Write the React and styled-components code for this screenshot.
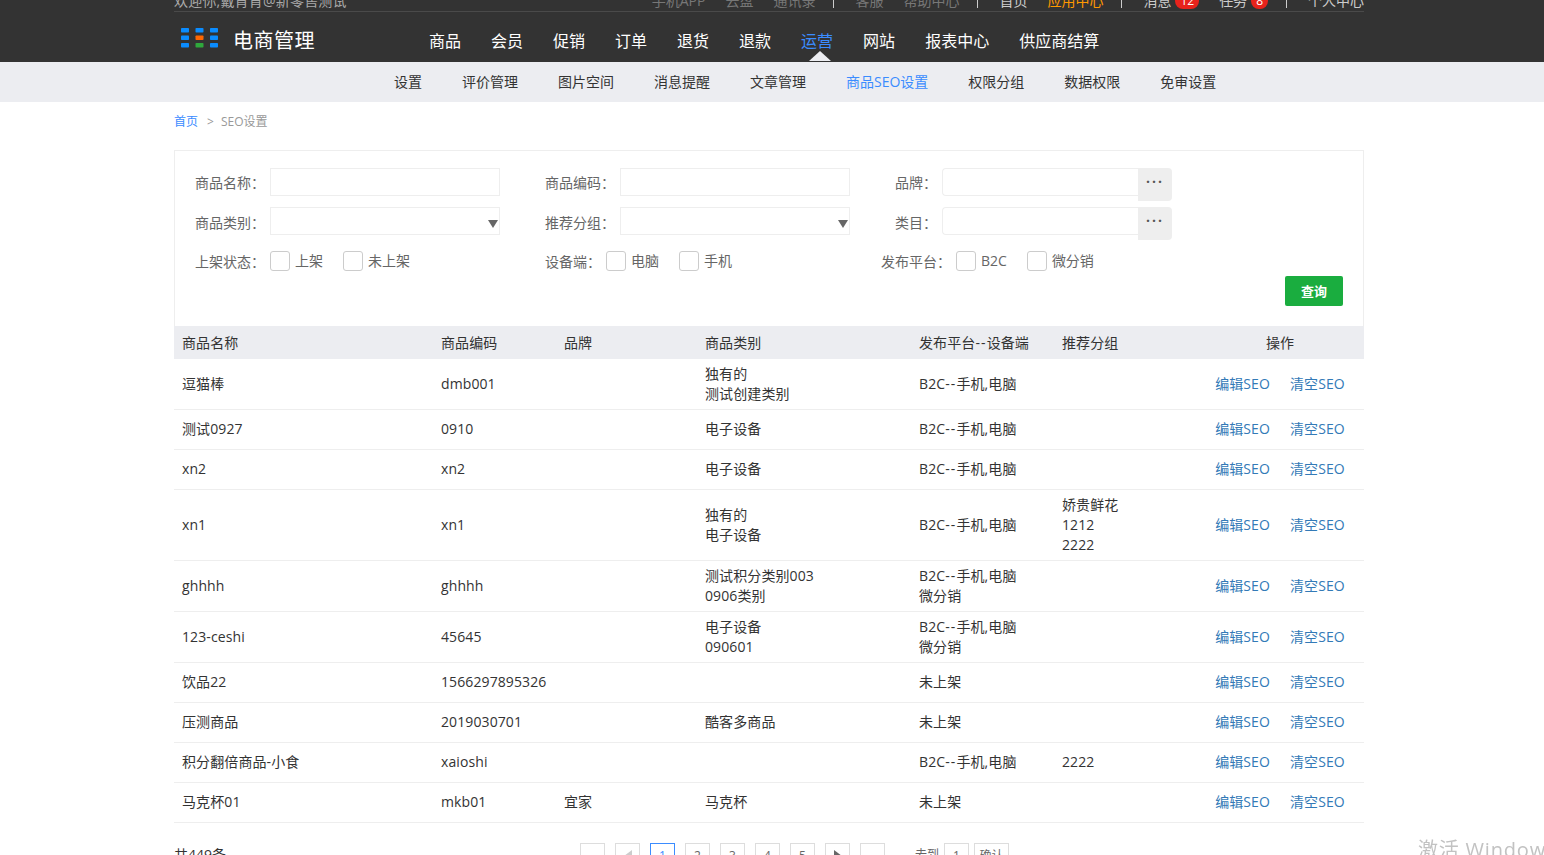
import React from 'react';
import styled, { createGlobalStyle } from 'styled-components';

const GlobalStyle = createGlobalStyle`
  html, body {
    margin: 0;
    height: 855px;
    overflow: hidden;
    background: #fff;
    font-family: "Open Sans", "Noto Sans CJK SC", sans-serif;
    font-size: 14px;
    color: #333;
  }
  * { box-sizing: border-box; }
`;

const Header = styled.header`
  background: #333;
  height: 62px;
`;
const Wrap = styled.div`
  width: 1190px;
  margin-left: 174px;
`;
const TopBar = styled.div`
  height: 12px;
  border-bottom: 1px solid #4a4a4a;
  display: flex;
  justify-content: space-between;
  align-items: flex-end;
  overflow: hidden;
  white-space: nowrap;
  line-height: 20px;
`;
const Welcome = styled.span`
  color: #aaa;
  letter-spacing: 0.2px;
`;
const TopLinks = styled.div`
  display: flex;
  align-items: center;
`;
const TopLink = styled.a`
  color: ${p => p.$color || '#ccc'};
  margin-left: ${p => p.$gap ?? 20}px;
`;
const Sep = styled.i`
  width: 1px;
  height: 14px;
  background: #ccc;
  margin: 0 1px 0 18px;
`;
const Badge = styled.b`
  display: inline-block;
  margin-left: 4px;
  min-width: 16px;
  padding: 0 5px;
  height: 16px;
  line-height: 16px;
  border-radius: 8px;
  font-size: 12px;
  font-weight: 400;
  text-align: center;
  color: #fff;
  background: #e8231c;
`;
const MainRow = styled.div`
  display: flex;
  height: 50px;
  align-items: center;
`;
const Brand = styled.div`
  width: 255px;
  padding-left: 7px;
  display: flex;
  align-items: center;
  gap: 15px;
  color: #fff;
  font-size: 20px;
  letter-spacing: 0.5px;
  margin-top: 5px;
  svg { margin-top: -4px; }
`;
const Nav = styled.nav`
  display: flex;
  gap: 30px;
  padding-top: 8px;
`;
const NavItem = styled.a`
  position: relative;
  font-size: 16px;
  line-height: 24px;
  color: ${p => (p.$active ? '#3b8cff' : '#fff')};
  ${p => p.$active && `
    &::after {
      content: '';
      position: absolute;
      left: 8px;
      top: 22px;
      border-left: 11px solid transparent;
      border-right: 11px solid transparent;
      border-bottom: 10px solid #ecedf1;
    }
  `}
`;
const SubBar = styled.div`
  background: #ecedf1;
  height: 40px;
`;
const SubNav = styled.div`
  display: flex;
  gap: 40px;
  padding-left: 220px;
  line-height: 40px;
`;
const SubItem = styled.a`
  color: ${p => (p.$active ? '#3b8cff' : '#333')};
`;
const Crumbs = styled.div`
  display: flex;
  align-items: center;
  height: 38px;
  font-size: 12px;
  color: #999;
`;
const CrumbLink = styled.a`
  color: #3b8cff;
`;
const CrumbSep = styled.span`
  margin: 0 7px 0 9px;
`;
const Panel = styled.section`
  margin-top: 10px;
  border: 1px solid #eee;
  border-bottom: 0;
  padding: 17px 20px 20px;
  height: 176px;
`;
const FormRow = styled.div`
  display: flex;
  height: 28px;
  margin-bottom: 11px;
`;
const CheckRow = styled.div`
  display: flex;
  height: 20px;
  margin-top: 16px;
  margin-bottom: 5px;
`;
const Field = styled.div`
  width: ${p => p.$w}px;
  display: flex;
  align-items: flex-start;
`;
const Label = styled.label`
  flex: none;
  width: ${p => p.$w}px;
  margin-right: 5px;
  padding-top: ${p => p.$drop || 0}px;
  color: #666;
  line-height: 28px;
  white-space: nowrap;
`;
const CheckLabel = styled(Label)`
  line-height: 22px;
`;
const Input = styled.input`
  width: ${p => p.$w || 230}px;
  height: 28px;
  border: 1px solid #eee;
  background: #fff;
  outline: 0;
  padding: 0 6px;
`;
const RoundInput = styled(Input)`
  border-radius: 4px 0 0 4px;
  border-right: 0;
`;
const Select = styled.div`
  position: relative;
  width: 230px;
  height: 28px;
  border: 1px solid #eee;
  &::after {
    content: '';
    position: absolute;
    right: 1px;
    top: 12px;
    border-left: 5.5px solid transparent;
    border-right: 5.5px solid transparent;
    border-top: 8px solid #666;
  }
`;
const Dots = styled.button`
  flex: none;
  width: 34px;
  height: 33px;
  padding: 0 0 7px;
  border: 0;
  border-radius: 0 4px 4px 0;
  background: #eee;
  color: #555;
  font: 700 14px "Open Sans", sans-serif;
  letter-spacing: 2px;
`;
const Check = styled.label`
  display: flex;
  align-items: flex-start;
  margin-right: 20px;
  color: #666;
  height: 20px;
  line-height: 19px;
  &::before {
    content: '';
    box-sizing: border-box;
    width: 20px;
    height: 20px;
    margin-right: 5px;
    border: 1px solid #ccc;
    border-radius: 3px;
    background: #fff;
  }
`;
const Actions = styled.div`
  display: flex;
  justify-content: flex-end;
`;
const Search = styled.button`
  width: 58px;
  height: 30px;
  padding: 0 0 2px;
  border: 0;
  border-radius: 2px;
  background: #1aad3f;
  color: #fff;
  font: 700 13px "Noto Sans CJK SC", sans-serif;
`;
const Table = styled.table`
  width: 1190px;
  table-layout: fixed;
  border-collapse: collapse;
  letter-spacing: 0.1px;
`;
const Th = styled.th`
  width: ${p => p.$w}px;
  height: 33px;
  padding: 0 8px 2px;
  background: #ecedf1;
  font-weight: 400;
  text-align: ${p => p.$center ? 'center' : 'left'};
`;
const Tr = styled.tr`
  border-bottom: 1px solid #eee;
  ${p => p.$single && 'td { padding-bottom: 7px; }'}
`;
const Td = styled.td`
  height: 40px;
  padding: 5px 8px;
  line-height: 20px;
  white-space: nowrap;
  text-align: ${p => p.$center ? 'center' : 'left'};
`;
const Line = styled.div``;
const Dash = styled.span`
  letter-spacing: 1.1px;
`;
const OpLink = styled.a`
  color: #337ab7;
  & + & { margin-left: 20px; }
`;
const Pager = styled.div`
  display: flex;
  margin-top: 20px;
  line-height: 24px;
`;
const Total = styled.div`
  width: 406px;
`;
const Pages = styled.div`
  display: flex;
  gap: 10px;
`;
const Page = styled.a`
  width: 25px;
  height: 25px;
  display: flex;
  align-items: center;
  justify-content: center;
  font-size: 12px;
  border: 1px solid ${p => (p.$active ? '#3b8cff' : '#ddd')};
  color: ${p => (p.$active ? '#3b8cff' : '#666')};
`;
const Arrow = styled.i`
  border-top: 6px solid transparent;
  border-bottom: 6px solid transparent;
  ${p => p.$left
    ? 'border-right: 8px solid #ccc;'
    : 'border-left: 8px solid #666;'}
`;
const Jump = styled.div`
  display: flex;
  margin-left: 30px;
  gap: 5px;
  font-size: 12px;
  color: #666;
`;
const JumpBox = styled.span`
  width: ${p => p.$w}px;
  height: 25px;
  border: 1px solid #ddd;
  text-align: center;
`;
const Watermark = styled.div`
  position: fixed;
  left: 1418px;
  top: 836px;
  font-size: 20px;
  letter-spacing: 0.8px;
  line-height: 28px;
  color: #c2c2c2;
  white-space: nowrap;
`;

const columns = [
  { title: '商品名称', w: 259 },
  { title: '商品编码', w: 123 },
  { title: '品牌', w: 141 },
  { title: '商品类别', w: 214 },
  { title: '发布平台--设备端', w: 143 },
  { title: '推荐分组', w: 142 },
  { title: '操作', w: 168, center: true },
];

const B2C = 'B2C--手机,电脑';
const rows = [
  ['逗猫棒', 'dmb001', '', ['独有的', '测试创建类别'], [B2C], []],
  ['测试0927', '0910', '', ['电子设备'], [B2C], []],
  ['xn2', 'xn2', '', ['电子设备'], [B2C], []],
  ['xn1', 'xn1', '', ['独有的', '电子设备'], [B2C], ['娇贵鲜花', '1212', '2222']],
  ['ghhhh', 'ghhhh', '', ['测试积分类别003', '0906类别'], [B2C, '微分销'], []],
  ['123-ceshi', '45645', '', ['电子设备', '090601'], [B2C, '微分销'], []],
  ['饮品22', '1566297895326', '', [], ['未上架'], []],
  ['压测商品', '2019030701', '', ['酷客多商品'], ['未上架'], []],
  ['积分翻倍商品-小食', 'xaioshi', '', [], [B2C], ['2222']],
  ['马克杯01', 'mkb01', '宜家', ['马克杯'], ['未上架'], []],
];

const Logo = () => (
  <svg width="37" height="20" viewBox="0 0 37 20">
    {[0, 7.5, 15].map(y => [0, 14.5, 29].map(x => (
      <rect
        key={`${x}-${y}`}
        x={x}
        y={y}
        width="8"
        height="4.5"
        rx="0.8"
        fill={x === 14.5 && y === 7.5 ? '#f60' : x === 14.5 && y === 15 ? '#2fa83c' : '#0a8cff'}
      />
    )))}
  </svg>
);

// the double hyphen sits wider in the original font
const Dashed = ({ text }) => {
  const parts = text.split('--');
  if (parts.length < 2) return text;
  return <>{parts[0]}<Dash>--</Dash>{parts[1]}</>;
};

const Lines = ({ items }) => items.map(t => <Line key={t}><Dashed text={t} /></Line>);

export default function App() {
  return (
    <>
      <GlobalStyle />
      <Header>
        <Wrap>
          <TopBar>
            <Welcome>欢迎你,戴肯肯@新零售测试</Welcome>
            <TopLinks>
              <TopLink $color="#777">手机APP</TopLink>
              <TopLink $color="#777">云盘</TopLink>
              <TopLink $color="#777">通讯录</TopLink>
              <Sep />
              <TopLink $color="#777">客服</TopLink>
              <TopLink $color="#777">帮助中心</TopLink>
              <Sep />
              <TopLink>首页</TopLink>
              <TopLink $color="#f90">应用中心</TopLink>
              <Sep />
              <TopLink>消息</TopLink>
              <Badge>12</Badge>
              <TopLink>任务</TopLink>
              <Badge>8</Badge>
              <Sep />
              <TopLink>个人中心</TopLink>
            </TopLinks>
          </TopBar>
          <MainRow>
            <Brand>
              <Logo />
              电商管理
            </Brand>
            <Nav>
              {['商品', '会员', '促销', '订单', '退货', '退款'].map(t => <NavItem key={t}>{t}</NavItem>)}
              <NavItem $active>运营</NavItem>
              {['网站', '报表中心', '供应商结算'].map(t => <NavItem key={t}>{t}</NavItem>)}
            </Nav>
          </MainRow>
        </Wrap>
      </Header>
      <SubBar>
        <Wrap>
          <SubNav>
            {['设置', '评价管理', '图片空间', '消息提醒', '文章管理'].map(t => <SubItem key={t}>{t}</SubItem>)}
            <SubItem $active>商品SEO设置</SubItem>
            {['权限分组', '数据权限', '免审设置'].map(t => <SubItem key={t}>{t}</SubItem>)}
          </SubNav>
        </Wrap>
      </SubBar>
      <Wrap>
        <Crumbs>
          <CrumbLink>首页</CrumbLink>
          <CrumbSep>&gt;</CrumbSep>
          SEO设置
        </Crumbs>
        <Panel>
          <FormRow>
            <Field $w={350}><Label $w={70} $drop={1}>商品名称：</Label><Input /></Field>
            <Field $w={350}><Label $w={70} $drop={1}>商品编码：</Label><Input /></Field>
            <Field $w={280}><Label $w={42} $drop={1}>品牌：</Label><RoundInput $w={196} /><Dots>···</Dots></Field>
          </FormRow>
          <FormRow>
            <Field $w={350}><Label $w={70} $drop={2}>商品类别：</Label><Select /></Field>
            <Field $w={350}><Label $w={70} $drop={2}>推荐分组：</Label><Select /></Field>
            <Field $w={280}><Label $w={42} $drop={2}>类目：</Label><RoundInput $w={196} /><Dots>···</Dots></Field>
          </FormRow>
          <CheckRow>
            <Field $w={350}>
              <CheckLabel $w={70}>上架状态：</CheckLabel>
              <Check>上架</Check>
              <Check>未上架</Check>
            </Field>
            <Field $w={336}>
              <CheckLabel $w={56}>设备端：</CheckLabel>
              <Check>电脑</Check>
              <Check>手机</Check>
            </Field>
            <Field $w={300}>
              <CheckLabel $w={70}>发布平台：</CheckLabel>
              <Check>B2C</Check>
              <Check>微分销</Check>
            </Field>
          </CheckRow>
          <Actions><Search>查询</Search></Actions>
        </Panel>
        <Table>
          <thead>
            <tr>
              {columns.map(c => <Th key={c.title} $w={c.w} $center={c.center}><Dashed text={c.title} /></Th>)}
            </tr>
          </thead>
          <tbody>
            {rows.map(r => (
              <Tr key={r[0]} $single={r[3].length < 2 && r[4].length < 2 && r[5].length < 2}>
                <Td>{r[0]}</Td>
                <Td>{r[1]}</Td>
                <Td>{r[2]}</Td>
                <Td><Lines items={r[3]} /></Td>
                <Td><Lines items={r[4]} /></Td>
                <Td><Lines items={r[5]} /></Td>
                <Td $center>
                  <OpLink>编辑SEO</OpLink>
                  <OpLink>清空SEO</OpLink>
                </Td>
              </Tr>
            ))}
          </tbody>
        </Table>
        <Pager>
          <Total>共449条</Total>
          <Pages>
            <Page />
            <Page><Arrow $left /></Page>
            <Page $active>1</Page>
            <Page>2</Page>
            <Page>3</Page>
            <Page>4</Page>
            <Page>5</Page>
            <Page><Arrow /></Page>
            <Page />
          </Pages>
          <Jump>
            <span>去到</span>
            <JumpBox $w={25}>1</JumpBox>
            <JumpBox $w={35}>确认</JumpBox>
          </Jump>
        </Pager>
      </Wrap>
      <Watermark>激活 Windows</Watermark>
    </>
  );
}
